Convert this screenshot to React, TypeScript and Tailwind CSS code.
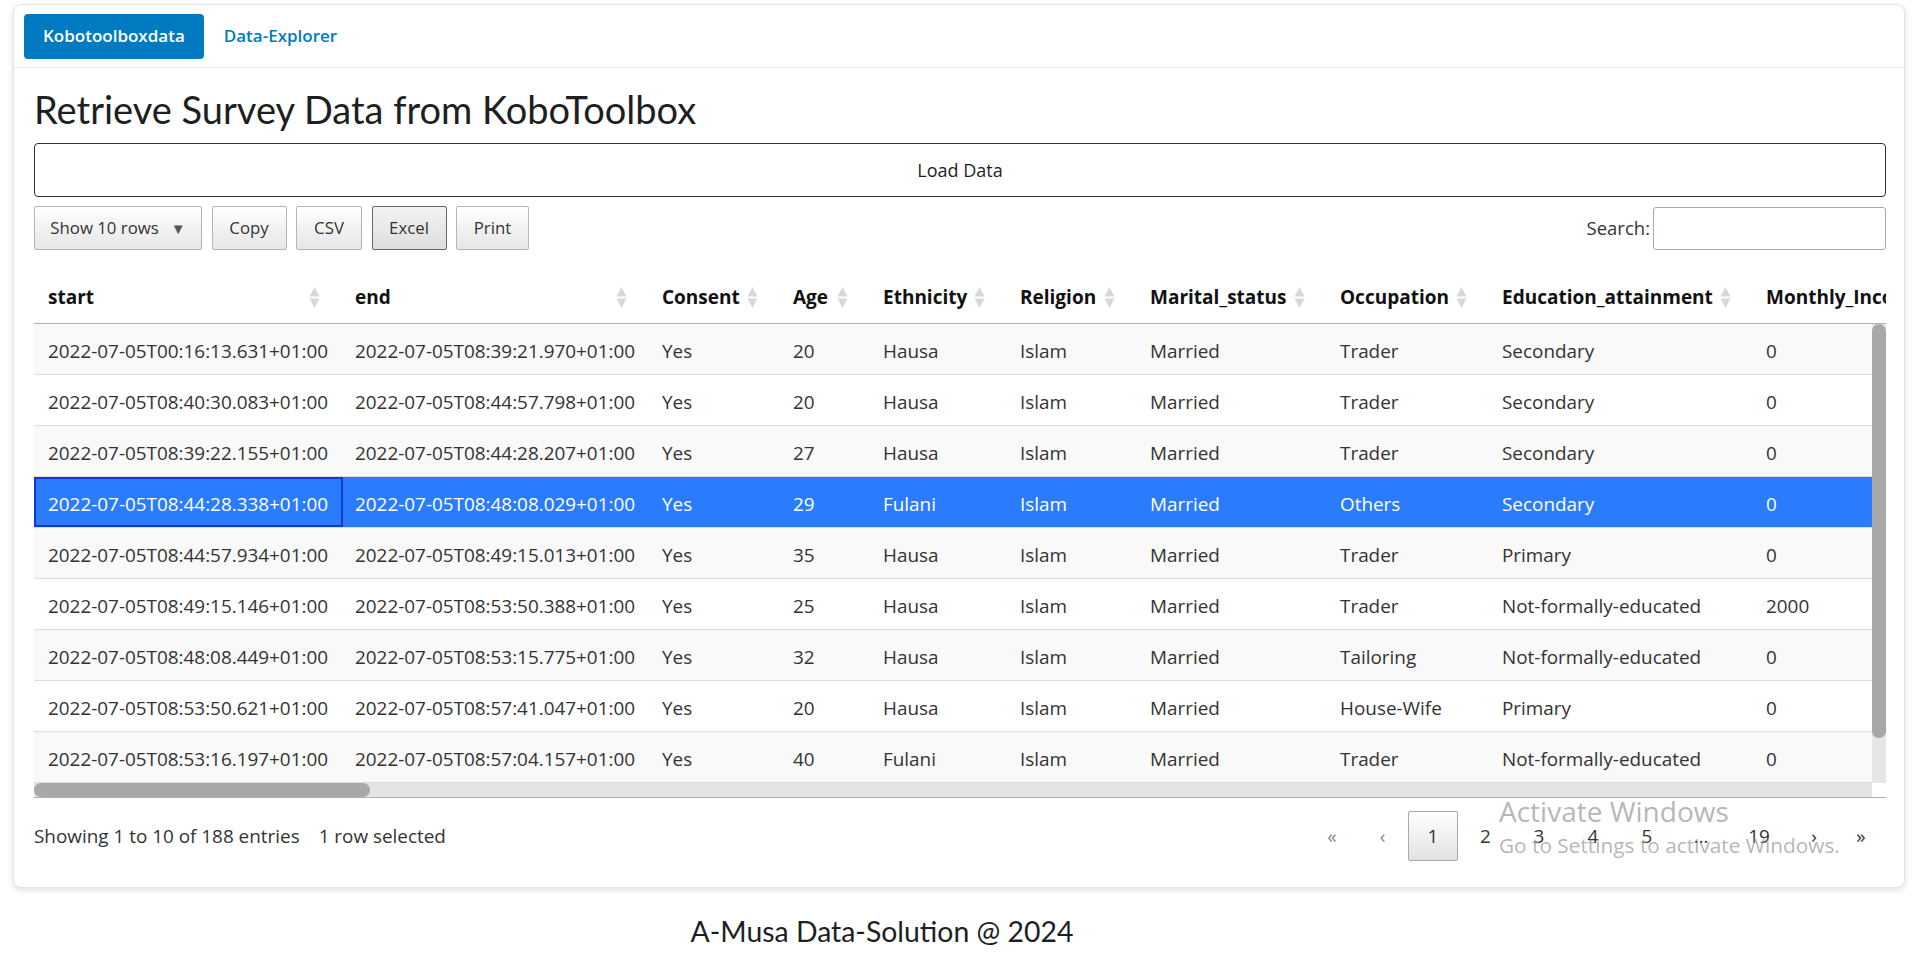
import React from 'react';

const cols = [
  { label: 'start', w: 'w-[309px]', pl: 'pl-[14px]' },
  { label: 'end', w: 'w-[307px]', pl: 'pl-[12px]' },
  { label: 'Consent', w: 'w-[131px]', pl: 'pl-[12px]' },
  { label: 'Age', w: 'w-[90px]', pl: 'pl-[12px]' },
  { label: 'Ethnicity', w: 'w-[137px]', pl: 'pl-[12px]' },
  { label: 'Religion', w: 'w-[130px]', pl: 'pl-[12px]' },
  { label: 'Marital_status', w: 'w-[190px]', pl: 'pl-[12px]' },
  { label: 'Occupation', w: 'w-[162px]', pl: 'pl-[12px]' },
  { label: 'Education_attainment', w: 'w-[264px]', pl: 'pl-[12px]' },
  { label: 'Monthly_Income', w: 'w-[250px]', pl: 'pl-[12px]' },
];

const rows = [
  ['2022-07-05T00:16:13.631+01:00', '2022-07-05T08:39:21.970+01:00', 'Yes', '20', 'Hausa', 'Islam', 'Married', 'Trader', 'Secondary', '0'],
  ['2022-07-05T08:40:30.083+01:00', '2022-07-05T08:44:57.798+01:00', 'Yes', '20', 'Hausa', 'Islam', 'Married', 'Trader', 'Secondary', '0'],
  ['2022-07-05T08:39:22.155+01:00', '2022-07-05T08:44:28.207+01:00', 'Yes', '27', 'Hausa', 'Islam', 'Married', 'Trader', 'Secondary', '0'],
  ['2022-07-05T08:44:28.338+01:00', '2022-07-05T08:48:08.029+01:00', 'Yes', '29', 'Fulani', 'Islam', 'Married', 'Others', 'Secondary', '0'],
  ['2022-07-05T08:44:57.934+01:00', '2022-07-05T08:49:15.013+01:00', 'Yes', '35', 'Hausa', 'Islam', 'Married', 'Trader', 'Primary', '0'],
  ['2022-07-05T08:49:15.146+01:00', '2022-07-05T08:53:50.388+01:00', 'Yes', '25', 'Hausa', 'Islam', 'Married', 'Trader', 'Not-formally-educated', '2000'],
  ['2022-07-05T08:48:08.449+01:00', '2022-07-05T08:53:15.775+01:00', 'Yes', '32', 'Hausa', 'Islam', 'Married', 'Tailoring', 'Not-formally-educated', '0'],
  ['2022-07-05T08:53:50.621+01:00', '2022-07-05T08:57:41.047+01:00', 'Yes', '20', 'Hausa', 'Islam', 'Married', 'House-Wife', 'Primary', '0'],
  ['2022-07-05T08:53:16.197+01:00', '2022-07-05T08:57:04.157+01:00', 'Yes', '40', 'Fulani', 'Islam', 'Married', 'Trader', 'Not-formally-educated', '0'],
];

const SELECTED = 3;

function SortIcon() {
  return (
    <svg width="11" height="23" viewBox="0 0 11 23" className="shrink-0">
      <path d="M5.5 1 L10.5 10.5 H0.5 Z" fill="#d8d8d8" />
      <path d="M5.5 22 L10.5 12.5 H0.5 Z" fill="#d8d8d8" />
    </svg>
  );
}

const btn =
  'flex h-[44px] items-center justify-center rounded-[2px] border border-[#b5b5b5] bg-gradient-to-b from-white to-[#e6e6e6] text-[16.8px] text-[#333]';

export default function App() {
  return (
    <div className="relative min-h-[954px] bg-white font-['Open_Sans',sans-serif] text-[#333]">
      <div className="pl-[13px] pr-[15px] pt-[4px]">
        <div className="rounded-[8px] border border-[#e2e4e7] bg-white shadow-[0_2px_6px_rgba(0,0,0,0.13)]">
          {/* tabs */}
          <div className="flex h-[63px] items-center border-b border-[#e6e8eb] px-[10px]">
            <div className="flex h-[45px] items-center rounded-[4px] bg-[#007bc2] px-[19px] text-[17px] font-semibold text-white">
              Kobotoolboxdata
            </div>
            <div className="flex h-[45px] items-center px-[20px] text-[17px] font-semibold text-[#007bc2]">
              Data-Explorer
            </div>
          </div>

          <div className="pb-[26px] pl-[20px] pr-[18px] pt-[17px]">
            <h2 className="font-['Lato',sans-serif] text-[38px] leading-[48px] text-[#1d1f21]">
              Retrieve Survey Data from KoboToolbox
            </h2>

            <button className="mt-[10px] flex h-[54px] w-full items-center justify-center rounded-[4px] border border-[#333] bg-white text-[18px] text-[#1d1f21]">
              Load Data
            </button>

            {/* toolbar */}
            <div className="mt-[9px] flex items-center justify-between">
              <div className="flex items-center gap-[9.5px]">
                <div className={`${btn} w-[168px] gap-[12px]`}>
                  <span>Show 10 rows</span>
                  <span className="text-[15px] leading-none text-[#555]">▼</span>
                </div>
                <div className={`${btn} w-[75px]`}>Copy</div>
                <div className={`${btn} w-[66px]`}>CSV</div>
                <div className="flex h-[44px] w-[75px] items-center justify-center rounded-[2px] border border-[#666] bg-gradient-to-b from-[#f3f3f3] to-[#dedede] text-[16.8px] text-[#333]">
                  Excel
                </div>
                <div className={`${btn} w-[73px]`}>Print</div>
              </div>
              <div className="flex items-center gap-[3px]">
                <span className="text-[18.5px] text-[#333]">Search:</span>
                <div className="h-[43px] w-[233px] rounded-[3px] border border-[#aaa] bg-white" />
              </div>
            </div>

            {/* table head */}
            <div className="mt-[22px] h-[52px] overflow-hidden border-b border-[#b0b0b0]">
              <div className="flex h-full">
                {cols.map((c) => (
                  <div
                    key={c.label}
                    className={`${c.w} ${c.pl} flex shrink-0 items-center justify-between pr-[23px] text-[19px] font-bold text-[#111]`}
                  >
                    <span className="whitespace-nowrap">{c.label}</span>
                    <SortIcon />
                  </div>
                ))}
              </div>
            </div>

            {/* table body */}
            <div className="flex">
              <div className="min-w-0 flex-1 overflow-hidden">
                {rows.map((r, i) => {
                  const sel = i === SELECTED;
                  const bg = sel ? 'bg-[#2a7cfd] text-white' : i % 2 === 0 ? 'bg-[#f9f9f9]' : 'bg-white';
                  return (
                    <div key={i} className={`flex h-[51px] border-b border-[#dcdcdc] ${bg}`}>
                      {r.map((v, j) => (
                        <div
                          key={j}
                          className={`${cols[j].w} ${cols[j].pl} flex shrink-0 items-center whitespace-nowrap pt-[4px] text-[18.9px] ${
                            sel && j === 0 ? 'shadow-[inset_0_0_0_2px_#0d3ccc]' : ''
                          }`}
                        >
                          {v}
                        </div>
                      ))}
                    </div>
                  );
                })}
              </div>
              <div className="w-[14px] shrink-0 bg-[#e6e6e6]">
                <div className="h-[414px] rounded-full bg-[#a8a8a8]" />
              </div>
            </div>
            <div className="flex h-[15px] border-b border-[#b0b0b0]">
              <div className="flex-1 bg-[#e4e4e4]">
                <div className="h-[14px] w-[336px] rounded-full bg-[#a8a8a8]" />
              </div>
              <div className="w-[14px] bg-white" />
            </div>

            {/* info + paging */}
            <div className="mt-[13px] flex h-[50px] items-center justify-between text-[18.9px] text-[#333]">
              <div className="flex items-center">
                <span>Showing 1 to 10 of 188 entries</span>
                <span className="ml-[19px]">1 row selected</span>
              </div>
              <div className="mr-[3px] flex items-center">
                <span className="flex h-[50px] w-[50px] items-center justify-center text-[#888]">«</span>
                <span className="ml-[2px] flex h-[50px] w-[47px] items-center justify-center text-[#888]">‹</span>
                <span className="ml-[2px] flex h-[50px] w-[50px] items-center justify-center rounded-[2px] border border-[#aaa] bg-gradient-to-b from-white to-[#e2e2e2]">
                  1
                </span>
                <span className="ml-[2px] flex h-[50px] w-[51px] items-center justify-center">2</span>
                <span className="ml-[2px] flex h-[50px] w-[52px] items-center justify-center">3</span>
                <span className="ml-[2px] flex h-[50px] w-[52px] items-center justify-center">4</span>
                <span className="ml-[2px] flex h-[50px] w-[52px] items-center justify-center">5</span>
                <span className="ml-[2px] flex h-[50px] w-[52px] items-center justify-center">…</span>
                <span className="ml-[2px] flex h-[50px] w-[60px] items-center justify-center">19</span>
                <span className="ml-[2px] flex h-[50px] w-[46px] items-center justify-center">›</span>
                <span className="ml-[2px] flex h-[50px] w-[44px] items-center justify-center">»</span>
              </div>
            </div>
          </div>
        </div>
      </div>

      <div className="mt-[26px] w-[1764px] text-center font-['Lato',sans-serif] text-[28.4px] leading-[34px] text-[#1d1f21]">
        A-Musa Data-Solution @ 2024
      </div>

      {/* OS watermark over the page */}
      <div className="pointer-events-none absolute left-[1499px] top-[795px] font-['Open_Sans',sans-serif] text-[rgba(140,140,140,0.65)]">
        <div className="text-[28px] leading-[32px]">Activate Windows</div>
        <div className="mt-[5px] text-[20.8px] leading-[26px]">Go to Settings to activate Windows.</div>
      </div>
    </div>
  );
}
